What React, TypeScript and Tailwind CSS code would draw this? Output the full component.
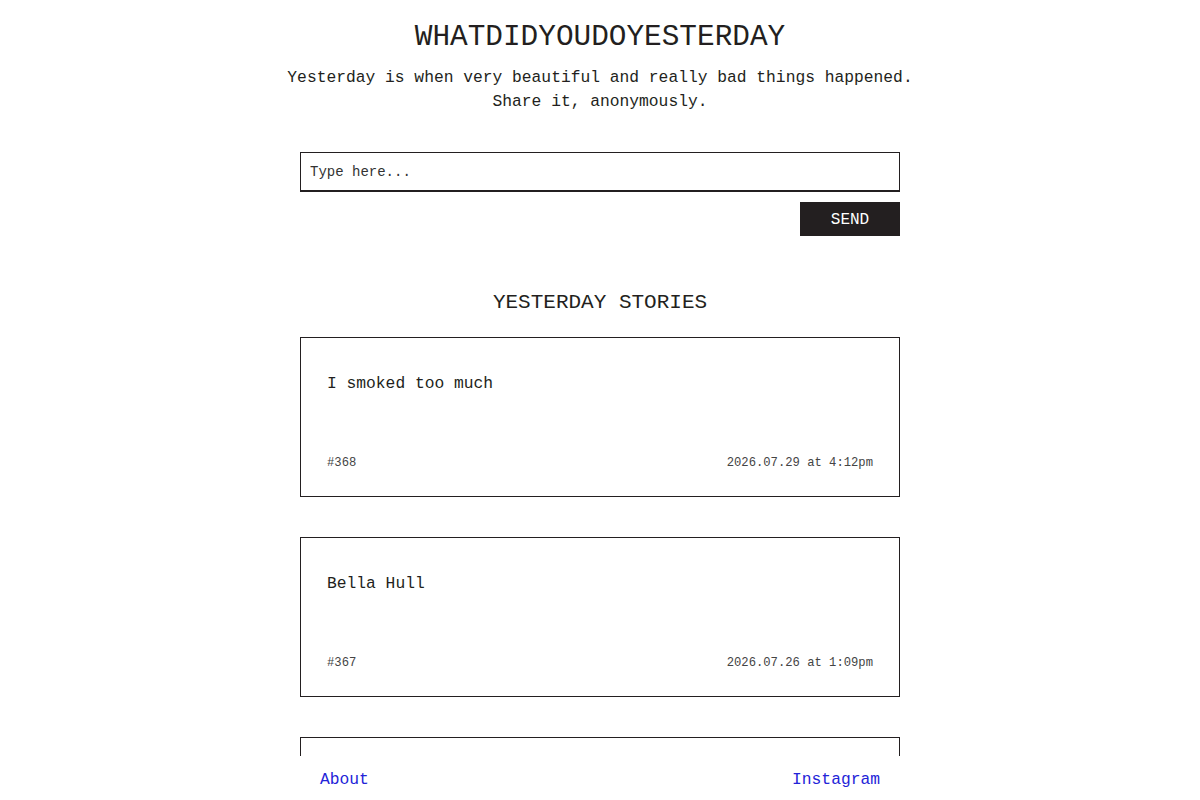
import { useState } from "react";

const STORIES = [
  { id: 368, text: "I smoked too much", date: "2026.07.29 at 4:12pm" },
  { id: 367, text: "Bella Hull", date: "2026.07.26 at 1:09pm" },
  { id: 366, text: "", date: "2026.07.25 at 9:41am" },
];

export default function App() {
  const [value, setValue] = useState("");

  return (
    <div
      className="min-h-screen bg-white pb-24 text-[#231f20]"
      style={{ fontFamily: "'Liberation Mono', 'DejaVu Sans Mono', monospace" }}
    >
      <header className="pt-5 text-center">
        <h1 className="text-[29.4px] leading-9 tracking-normal">WHATDIDYOUDOYESTERDAY</h1>
        <p className="mt-[10px] text-[16.3px] leading-6">
          Yesterday is when very beautiful and really bad things happened.
          <br />
          Share it, anonymously.
        </p>
      </header>

      <main className="mx-auto w-[600px]">
        {/* Form */}
        <form className="mt-[38px] flex flex-col" onSubmit={(e) => e.preventDefault()}>
          <input
            autoFocus
            value={value}
            onChange={(e) => setValue(e.target.value)}
            placeholder="Type here..."
            className="h-10 w-full border border-b-2 border-[#231f20] px-[9px] text-[14px] text-[#231f20] outline-none placeholder:text-[#333]"
          />
          <div className="mt-[10px] flex justify-end">
            <button
              type="submit"
              className="h-[34px] w-[100px] bg-[#231f20] pt-[2px] text-[16px] text-white"
            >
              SEND
            </button>
          </div>
        </form>

        {/* Stories */}
        <h2 className="mt-[53px] text-center text-[21px] leading-7">YESTERDAY STORIES</h2>
        <div className="mt-5 flex flex-col gap-10">
          {STORIES.map((s) => (
            <article
              key={s.id}
              className="flex h-[160px] flex-col justify-between border border-[#231f20] px-[26px] pb-[25px] pt-[34px]"
            >
              <p className="text-[16.3px] leading-6">{s.text}</p>
              <div className="flex justify-between text-[12.2px] leading-4 text-[#444]">
                <span>#{s.id}</span>
                <span>{s.date}</span>
              </div>
            </article>
          ))}
        </div>
      </main>

      {/* Footer */}
      <footer className="fixed inset-x-0 bottom-0 bg-white">
        <div className="mx-auto flex w-[600px] justify-between px-5 pb-2 pt-3 text-[16.3px] leading-6 text-[#2323d8]">
          <a href="#">About</a>
          <a href="#">Instagram</a>
        </div>
      </footer>
    </div>
  );
}
